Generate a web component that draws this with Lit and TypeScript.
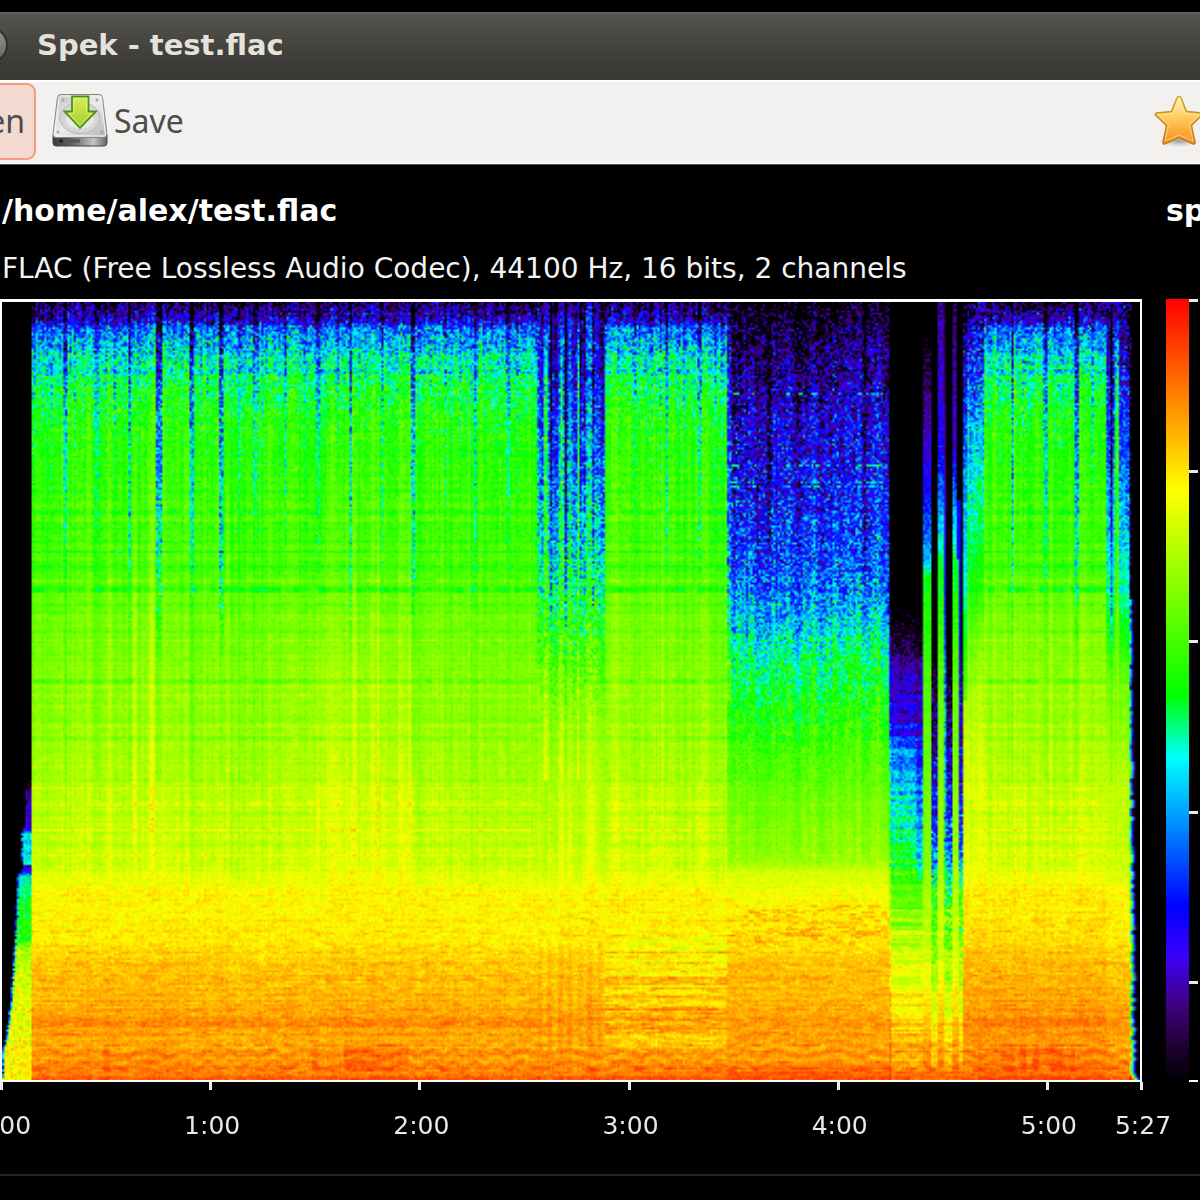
import { LitElement, html, css } from "lit";
import { customElement, query } from "lit/decorators.js";

type Stop = [number, number];

const PALETTE: [number, number, number, number][] = [
  [0, 0, 0, 0],
  [0.05, 34, 0, 56],
  [0.1, 66, 0, 130],
  [0.16, 58, 0, 250],
  [0.224, 0, 0, 255],
  [0.414, 0, 255, 255],
  [0.494, 0, 255, 0],
  [0.756, 255, 255, 0],
  [1, 255, 0, 0],
];

/* Level curves: [vertical position, signal level]. */
const LOUD: Stop[] = [
  [302, 0.06], [312, 0.11], [322, 0.18], [327, 0.29], [342, 0.37], [360, 0.43], [378, 0.48], [400, 0.515],
  [440, 0.54], [520, 0.565], [580, 0.58], [602, 0.61], [640, 0.625], [700, 0.645], [780, 0.68], [840, 0.7],
  [876, 0.72], [888, 0.75], [905, 0.76], [940, 0.77], [952, 0.795], [1000, 0.825], [1022, 0.85], [1040, 0.84],
  [1060, 0.86], [1074, 0.87], [1080, 0.93],
];
const BREAKDOWN: Stop[] = [
  [302, 0.05], [330, 0.16], [400, 0.23], [480, 0.33], [560, 0.43], [620, 0.52], [700, 0.63], [780, 0.69],
];
const QUIET: Stop[] = [
  [302, -0.02], [330, 0.06], [370, 0.12], [430, 0.18], [480, 0.21], [560, 0.28], [620, 0.38], [655, 0.47],
  [700, 0.52], [760, 0.58], [860, 0.65], [872, 0.71], [905, 0.76], [945, 0.78], [960, 0.81], [1000, 0.82],
  [1020, 0.845], [1060, 0.85], [1080, 0.93],
];
const PAUSE: Stop[] = [
  [302, -0.2], [600, -0.08], [640, 0.03], [690, 0.16], [732, 0.18], [742, 0.3], [780, 0.34], [815, 0.41],
  [850, 0.48], [880, 0.54], [900, 0.61], [940, 0.68], [1000, 0.76], [1060, 0.83], [1080, 0.92],
];
const GAPS: Stop[] = [
  [302, -0.2], [640, -0.03], [700, 0.05], [760, 0.15], [800, 0.2], [840, 0.28], [870, 0.4], [890, 0.52],
  [940, 0.61], [1000, 0.71], [1040, 0.77], [1060, 0.82], [1080, 0.92],
];
const RISE: Stop[] = [
  [302, 0.03], [330, 0.15], [380, 0.27], [430, 0.36], [500, 0.43], [580, 0.51], [640, 0.6], [700, 0.67], [800, 0.72],
];
const TAIL: Stop[] = [
  [302, 0.06], [340, 0.15], [430, 0.27], [500, 0.35], [560, 0.41], [620, 0.49], [680, 0.61], [800, 0.7],
];
const PEAK_A: Stop[] = [
  [302, -0.1], [350, 0.02], [420, 0.12], [500, 0.22], [560, 0.36], [578, 0.5], [700, 0.58], [860, 0.63], [960, 0.71], [1080, 0.9],
];
const PEAK_B: Stop[] = [
  [302, 0.1], [450, 0.2], [490, 0.3], [570, 0.5], [700, 0.6], [860, 0.66], [960, 0.72], [1080, 0.9],
];
const INTRO: Stop[] = [
  [780, 0.02], [796, 0.12], [828, 0.14], [834, 0.38], [864, 0.4], [866, 0.12], [871, 0.16], [876, 0.42],
  [900, 0.5], [940, 0.54], [952, 0.68], [1000, 0.73], [1080, 0.76],
];
const INTRO_EDGE: Stop[] = [
  [780, 27], [830, 24], [834, 21], [868, 22], [874, 18], [920, 16], [980, 12], [1020, 8], [1056, 2],
];

/* Dips: [horizontal position, width, depth]. */
const DIPS: [number, number, number][] = [
  [34, 4, 0.35], [51, 2, 0.5], [65, 3, 0.7], [74, 2, 0.4], [83, 2, 0.4], [96, 4, 0.6], [106, 2, 0.4], [115, 2, 0.5],
  [129, 2, 0.9], [138, 2, 0.35], [159, 4, 1], [170, 2, 0.3], [192, 3, 0.8], [201, 2, 0.3], [208, 2, 0.35],
  [222, 4, 1], [240, 2, 0.45], [256, 4, 0.6], [263, 2, 0.3], [286, 2, 0.7], [304, 2, 0.3], [318, 2, 0.7],
  [337, 2, 0.3], [350, 2, 1], [382, 2, 0.8], [398, 2, 0.3], [413, 3, 0.9], [430, 2, 0.3], [446, 2, 0.5],
  [460, 2, 0.4], [475, 3, 0.8], [492, 2, 0.4], [508, 3, 0.6], [517, 2, 0.4], [619, 2, 0.5], [634, 3, 0.55],
  [651, 2, 0.45], [660, 2, 0.5], [667, 2, 0.8], [684, 2, 0.4], [699, 3, 0.75], [715, 2, 0.5], [722, 2, 0.5],
  [1000, 2, 0.5], [1013, 2, 0.9], [1024, 2, 0.4], [1045, 3, 0.8], [1060, 2, 0.4], [1077, 3, 1], [1093, 2, 0.5],
  [551, 2, 0.9], [566, 2, 1], [594, 2, 1], [585, 2, 0.4], [738, 8, 0.5], [769, 4, 0.7], [802, 11, 0.45],
  [834, 8, 0.4], [865, 3, 0.9], [1112, 2, 1],
];
const RIDGES: [number, number, number][] = [
  [134, 4, 0.06], [152, 3, 0.06], [339, 2, 0.04], [355, 3, 0.06], [372, 3, 0.03], [378, 3, 0.06], [110, 2, 0.03],
  [324, 12, 0.02], [410, 2, 0.05], [400, 2, 0.03], [318, 2, 0.04], [236, 2, 0.03], [228, 2, 0.03], [283, 2, 0.03],
  [662, 2, 0.03], [1004, 3, 0.03], [1032, 3, 0.02], [1050, 2, 0.03], [1072, 3, 0.03],
];
/* Horizontal bands: [vertical position, height, change]. */
const BANDS: [number, number, number][] = [
  [372, 4, -0.05], [431, 2, -0.03], [457, 3, -0.03], [490, 2, -0.03], [512, 4, -0.035], [520, 3, 0.03],
  [528, 2, -0.03], [537, 2, -0.03], [542, 2, -0.03], [548, 3, 0.03], [552, 3, -0.045], [558, 3, 0.03],
  [567, 3, -0.04], [580, 3, 0.02], [589, 6, -0.07], [605, 2, -0.03], [613, 2, -0.03], [632, 3, -0.05],
  [641, 2, 0.03], [660, 2, -0.03], [682, 4, -0.045], [695, 2, 0.03], [704, 3, -0.03], [720, 2, -0.02],
  [739, 4, -0.02], [758, 5, -0.02], [780, 4, -0.02], [788, 2, 0.03], [804, 3, 0.035], [812, 5, -0.015],
  [830, 3, 0.04], [846, 5, -0.02], [856, 3, 0.03], [864, 5, -0.02], [873, 2, 0.02],
  [1024, 5, 0.02], [1050, 2, 0.02], [1056, 2, 0.02], [1069, 2, 0.02],
];

function curve(stops: Stop[], at: number): number {
  if (at <= stops[0][0]) return stops[0][1];
  for (let i = 1; i < stops.length; i++) {
    if (at <= stops[i][0]) {
      const [a, va] = stops[i - 1];
      const [b, vb] = stops[i];
      return va + ((vb - va) * (at - a)) / (b - a);
    }
  }
  return stops[stops.length - 1][1];
}

/* Repeatable noise in the range -1 to 1. */
function noise(a: number, b: number, seed: number): number {
  let h = Math.imul(a + 7919, 374761393) ^ Math.imul(b + 104729, 668265263) ^ Math.imul(seed + 1, 2246822519);
  h = Math.imul(h ^ (h >>> 13), 1274126177);
  h = Math.imul(h ^ (h >>> 16), 2246822519);
  return ((h ^ (h >>> 15)) >>> 0) / 2147483648 - 1;
}

const clamp = (v: number) => Math.max(0, Math.min(1, v));

function colour(level: number): [number, number, number] {
  const v = clamp(level);
  for (let i = 1; i < PALETTE.length; i++) {
    if (v <= PALETTE[i][0]) {
      const p = PALETTE[i - 1];
      const q = PALETTE[i];
      const t = (v - p[0]) / (q[0] - p[0]);
      return [p[1] + (q[1] - p[1]) * t, p[2] + (q[2] - p[2]) * t, p[3] + (q[3] - p[3]) * t];
    }
  }
  return [255, 0, 0];
}

function level(x: number, y: number, i: number, j: number): number {
  const n = (noise(i, j, 1) + noise(i, j, 2)) / 2;
  if (x < 32) {
    const edge = curve(INTRO_EDGE, y) + noise(0, j, 3) * 1.2;
    if (y < 780 || x < edge) return 0;
    const inside = curve(INTRO, y) + n * 0.1;
    return x < edge + 2 ? Math.min(inside, 0.2 + (x - edge) * 0.12) : inside;
  }
  const loud = curve(LOUD, y);
  const top = clamp((620 - y) / 320);
  const low = clamp((y - 870) / 30);
  let v = loud;
  let grain = 0.035 + 0.13 * clamp((450 - y) / 120) + 0.03 * clamp((600 - y) / 200);
  let bands = 1;
  let column = noise(i, 0, 4) * (0.022 + 0.03 * top) + noise(Math.floor(i / 6), 0, 13) * 0.014;
  let dipScale = 1;

  if (x < 537) {
    if (x > 300 && x < 415) v += 0.015 * clamp((y - 600) / 60) * (1 - low);
  } else if (x < 604) {
    v = y < 780 ? curve(BREAKDOWN, y) : loud;
    grain = 0.035 + 0.15 * clamp((740 - y) / 160);
    column *= 1 + 1.6 * clamp((760 - y) / 300);
    if (y < 780 && (Math.abs(x - 546) < 1.6 || Math.abs(x - 562) < 1.6 || Math.abs(x - 578) < 1.6)) {
      v = Math.max(v + 0.05, loud * 0.92);
      column = 0;
    }
    if (y > 940 && y < 1050) v += Math.cos((x / 5) * Math.PI) * 0.012;
    dipScale = 1.1;
    bands = 0.4;
  } else if (x < 728) {
    if (y > 925) {
      const stripe = clamp((y - 925) / 20) * clamp((1062 - y) / 30);
      v += stripe * (noise(0, j, 5) * 0.04 - 0.025);
      v += stripe * noise(Math.floor((i + j * 4) / 6), j, 6) * 0.035;
    }
  } else if (x < 890) {
    v = curve(QUIET, y);
    const body = clamp((870 - y) / 20);
    const reach = 0.45 + 0.55 * clamp((760 - y) / 100);
    grain = 0.035 + 0.17 * clamp((800 - y) / 240);
    column = (noise(i, 0, 4) * 0.05 + noise(Math.floor(i / 4), 0, 7) * 0.045) * body * reach;
    bands = 0.4;
    if (x < 732 && y < 700) v += 0.06;
    const dotted = [394, 466, 483, 487].some((r) => Math.abs(y - r) < 1);
    if (dotted && noise(Math.floor(i / 2), 0, 8) > 0.1 && noise(i, j, 14) > -0.5) return 0.42 + n * 0.14;
    if (y > 905 && y < 945 && noise(Math.floor(i / 3), j, 15) > 0.4) v += 0.05;
  } else if (x < 922) {
    v = curve(PAUSE, y);
    grain = y > 880 ? 0.04 : 0.1;
    bands = 0.3;
    if (y > 680) v += noise(0, Math.floor(j / 2), 9) * 0.06 * clamp((1040 - y) / 150);
    if (x < 892) v += 0.05;
    if (x > 917 && y > 740 && y < 880) v -= 0.08;
    if (y > 880) v += noise(0, j, 16) * 0.035;
  } else if (x < 964) {
    v = curve(GAPS, y);
    grain = 0.16 * clamp((1000 - y) / 100) * clamp((y - 640) / 60) + 0.04;
    bands = 0.3;
    column *= 0.5;
    if (y > 880) v += noise(0, j, 16) * 0.04;
    const first = x > 923 && x < 931;
    const second = x > 937 && x < 943;
    const third = x > 953 && x < 958 - (y < 560 ? 2 : 0);
    if (first) v = curve(PEAK_A, y);
    if (second || third) v = curve(PEAK_B, y) - (third && y < 470 ? 0.04 : 0);
    if (first || second || third) {
      grain = 0.06 * clamp((700 - y) / 200) + 0.03;
      column = 0;
    } else if (Math.abs(x - 944) < 1.1) {
      v = Math.max(v, curve([[302, 0], [440, 0.08], [560, 0.18], [700, 0.34], [860, 0.42]], y));
    } else if (x > 957 && x < 960 && y > 500) {
      v = Math.max(v, 0.2);
    }
    if (x > 962) v = Math.max(v, loud - 0.22);
  } else if (x < 984) {
    v = y < 800 ? curve(RISE, y) : loud + 0.01;
    grain += 0.07 * clamp((560 - y) / 100);
    if (x < 967 && y < 700) v -= 0.1;
    bands = 0.5;
  } else if (x < 1107) {
    v = loud + 0.015 * clamp((y - 560) / 80);
  } else if (x < 1129.5) {
    v = y < 800 ? curve(TAIL, y) : loud;
    grain += 0.07 * clamp((640 - y) / 100);
    if (x > 1114 && x < 1118 && y < 800) v = Math.max(v, loud - 0.01);
    bands = 0.5;
  } else {
    if (y < 600) return x < 1131 && n > 0.2 ? 0.1 : 0;
    const flare = y > 1072 ? (y - 1072) * 0.6 : 0;
    const edge = 1132 + clamp((y - 700) / 300) * 2.5 + noise(1, Math.floor(j / 2), 3) * 1.6 + flare;
    return clamp(0.2 + (edge - x) * 0.12) * (x < edge + 1.5 ? 1 : 0);
  }

  for (const [at, size, amount] of BANDS) {
    if (Math.abs(y - at) <= size / 2) v += amount * bands * (0.9 + 0.6 * noise(Math.floor(i / 3), at, 17));
  }
  for (const [at, size, depth] of DIPS) {
    if (Math.abs(x - at) <= size / 2 + 0.2) {
      const reach = 420 + depth * 250;
      const strength = clamp((reach - y) / 280);
      v -= depth * 0.25 * strength * dipScale;
      grain += depth * 0.12 * clamp(strength * 4);
      if (y > 460 && y < 780) v -= depth * 0.03;
    }
  }
  for (const [at, size, amount] of RIDGES) {
    if (Math.abs(x - at) <= size / 2) v += amount * clamp((y - 380) / 200) * clamp((880 - y) / 60);
  }
  v += noise(0, j, 10) * 0.018 * bands * (1 - 0.5 * low);
  v += noise(Math.floor((i + j * 3) / 5), j, 11) * (0.006 + 0.012 * low);
  if (low > 0 && noise(0, j, 18) > 0.1 && noise(Math.floor((i + j * 7) / 4), j, 19) > 0) v += 0.022 * low;
  if (y > 1044 && y < 1072) {
    const wave = Math.sin(x / 5 + Math.sin(x / 37) * 4) * 3;
    const ripple = Math.sin((y + wave) / 1.9);
    v += ripple * 0.022;
    if (((x > 288 && x < 408) || (x > 978 && x < 1075)) && noise(Math.floor(i / 3), 0, 12) > 0) v += 0.03;
    if (Math.abs(x - 107) < 3) v += 0.03;
  }
  return Math.min(v + column * (1 - 0.75 * low) + n * grain, 0.95);
}

@customElement("spectrogram-plot")
class SpectrogramPlot extends LitElement {
  static styles = css`
    :host {
      display: block;
      min-width: 0;
      min-height: 0;
      border: 2px solid #fff;
      border-top-width: 3px;
      overflow: hidden;
    }
    .plot {
      display: block;
      width: 100%;
      height: 100%;
    }
  `;

  @query("canvas") private canvas!: HTMLCanvasElement;

  firstUpdated() {
    const { width, height } = this.canvas;
    const context = this.canvas.getContext("2d")!;
    const image = context.createImageData(width, height);
    for (let j = 0; j < height; j++) {
      const y = 302 + ((j + 0.5) * 778) / height;
      for (let i = 0; i < width; i++) {
        const x = 2 + ((i + 0.5) * 1138) / width;
        const [r, g, b] = colour(level(x, y, i, j));
        image.data.set([r, g, b, 255], (j * width + i) * 4);
      }
    }
    context.putImageData(image, 0, 0);
  }

  render() {
    return html`<canvas class="plot" width="540" height="369" role="img" aria-label="Spectrogram"></canvas>`;
  }
}

@customElement("app-root")
class AppRoot extends LitElement {
  static styles = css`
    :host {
      display: flex;
      flex-direction: column;
      min-height: 100vh;
      box-sizing: border-box;
      padding-top: 12px;
      overflow: hidden;
      background: #000;
      color: #fff;
      font-family: "DejaVu Sans", sans-serif;
    }
    button {
      font: inherit;
      color: inherit;
      background: none;
      border: 0;
      padding: 0;
      margin: 0;
    }
    .titlebar {
      display: flex;
      align-items: center;
      gap: 29px;
      height: 68px;
      box-sizing: border-box;
      padding-bottom: 4px;
      border-top: 2px solid #5f5e57;
      background: linear-gradient(#55544d, #45443f 45%, #3c3b37 75%, #3a3935);
    }
    .control {
      flex: none;
      width: 36px;
      height: 36px;
      margin-left: -28px;
      border-radius: 50%;
      border: 2px solid #32312d;
      background: linear-gradient(#92918a, #67665f);
    }
    .caption {
      margin: 0;
      font-size: 29px;
      line-height: 40px;
      font-weight: 700;
      color: #e4e2db;
      white-space: nowrap;
    }
    .toolbar {
      display: flex;
      align-items: center;
      gap: 16px;
      height: 84px;
      box-sizing: border-box;
      padding-bottom: 2px;
      border-top: 2px solid #fff;
      border-bottom: 2px solid #fbfbfa;
      box-shadow: 0 1px 0 #55534f;
      background: #f2f1ef;
      color: #4c4c4c;
      font-family: "Noto Sans", sans-serif;
      font-size: 32px;
      line-height: 40px;
      overflow: hidden;
    }
    .open {
      flex: none;
      display: flex;
      align-items: center;
      justify-content: flex-end;
      width: 36px;
      height: 77px;
      box-sizing: border-box;
      padding-right: 9px;
      overflow: hidden;
      border: 2px solid #f59a7a;
      border-left: 0;
      border-radius: 0 9px 9px 0;
      background: #f2dad1;
    }
    .save {
      display: flex;
      align-items: center;
      gap: 6px;
    }
    .drive {
      display: block;
      width: 56px;
      height: 56px;
    }
    .donate {
      flex: none;
      width: 46px;
      margin-left: auto;
      overflow: hidden;
    }
    .star {
      display: block;
      width: 50px;
      height: 54px;
    }
    .view {
      flex: 1;
      display: grid;
      grid-template-columns: minmax(0, 1fr) 34px;
      grid-template-rows: 56px 60px minmax(500px, 1fr) auto;
      column-gap: 24px;
      padding: 19px 0 12px;
      border-bottom: 2px solid #262626;
      margin-bottom: 25px;
    }
    .path,
    .brand {
      margin: 0;
      font-size: 30px;
      line-height: 56px;
      font-weight: 700;
      white-space: nowrap;
      overflow: hidden;
    }
    .path {
      padding-left: 2px;
    }
    .codec {
      grid-column: 1 / -1;
      margin: 0;
      padding-left: 2px;
      font-size: 28px;
      line-height: 60px;
      color: #f4f4f4;
      white-space: nowrap;
    }
    .scale {
      display: grid;
      grid-template-columns: 23px 9px;
    }
    .ramp {
      background: linear-gradient(
        #f00,
        #ff0 24.4%,
        #0f0 50.6%,
        #0ff 58.6%,
        #00f 77.6%,
        #3a00fa 84%,
        #420082 90%,
        #220038 95%,
        #000
      );
    }
    .levels {
      display: grid;
      grid-template-rows: repeat(4, 17fr) 10fr;
    }
    .step {
      border-top: 3px solid #e8e8e8;
    }
    .step:last-child {
      border-bottom: 2px solid #fff;
    }
    .times {
      display: grid;
      grid-template-columns: repeat(5, 60fr) 27fr 2px;
      font-size: 25px;
      line-height: 72px;
      color: #e8e8e8;
    }
    .time::before {
      content: "";
      display: block;
      width: 3px;
      height: 8px;
      background: #eee;
    }
    .stamp {
      display: flex;
      justify-content: center;
      width: 6px;
    }
  `;

  private times = ["0:00", "1:00", "2:00", "3:00", "4:00", "5:00", "5:27"];

  render() {
    return html`
      <header class="titlebar">
        <button class="control" aria-label="Maximize"></button>
        <h1 class="caption">Spek - test.flac</h1>
      </header>
      <nav class="toolbar">
        <button class="open">Open</button>
        <button class="save">
          <svg class="drive" viewBox="0 0 56 56" aria-hidden="true">
            <defs>
              <linearGradient id="lid" x1="0" y1="0" x2="1" y2="1">
                <stop offset="0" stop-color="#c4c4c4" />
                <stop offset=".5" stop-color="#ececec" />
                <stop offset="1" stop-color="#b4b4b4" />
              </linearGradient>
              <linearGradient id="front" x1="0" y1="0" x2="1" y2="0">
                <stop offset="0" stop-color="#3c3c3c" />
                <stop offset=".35" stop-color="#606060" />
                <stop offset=".75" stop-color="#c4c4c4" />
                <stop offset="1" stop-color="#666" />
              </linearGradient>
              <linearGradient id="arrow" x1="0" y1="0" x2="0" y2="1">
                <stop offset="0" stop-color="#d8ee5c" />
                <stop offset="1" stop-color="#a1cb2c" />
              </linearGradient>
            </defs>
            <path d="M1 42h54v8q0 3-3 3H4q-3 0-3-3z" fill="url(#front)" stroke="#444" />
            <path d="M9 1.500h38q3 0 3.500 3l4.500 37q0 3-3 3H4q-3 0-3-3L5.500 4.500q.5-3 3.500-3z" fill="url(#lid)" stroke="#858585" />
            <path d="M9.500 3h37q2 0 2.500 2l4.500 36.500q0 1.500-2 1.500h-47q-2 0-2-1.500L7 5q.5-2 2.500-2z" fill="none" stroke="#f7f7f7" />
            <ellipse cx="28" cy="25" rx="20" ry="15.500" fill="#d6d6d6" stroke="#b5b5b5" />
            <ellipse cx="28" cy="27" rx="14" ry="9" fill="#e8e8e8" />
            <g fill="#a5a5a5">
              <circle cx="11" cy="7" r="1.500" />
              <circle cx="45" cy="7" r="1.500" />
              <circle cx="6" cy="39" r="1.500" />
              <circle cx="50" cy="39" r="1.500" />
            </g>
            <path d="M7 46.500h4v3H7z" fill="#222" />
            <path d="M12 46.500h16v3H12z" fill="#555" />
            <path d="M20 3.500h16.500v15h7.500L28 35 12.500 18.500H20z" fill="url(#arrow)" stroke="#4d9310" stroke-width="1.800" />
            <path d="M21.800 5.300h12.900v15h5L28 32.500 16.700 20.300h5.100z" fill="none" stroke="#e8f59a" stroke-opacity=".7" />
          </svg>
          <span>Save</span>
        </button>
        <button class="donate" aria-label="Donate">
          <svg class="star" viewBox="0 0 50 54" aria-hidden="true">
            <defs>
              <linearGradient id="gold" x1="0" y1="0" x2="0" y2="1">
                <stop offset="0" stop-color="#fff3bd" />
                <stop offset=".45" stop-color="#fdcb5c" />
                <stop offset="1" stop-color="#f68f1d" />
              </linearGradient>
              <linearGradient id="rim" x1="0" y1="0" x2="0" y2="1">
                <stop offset="0" stop-color="#cba31c" />
                <stop offset="1" stop-color="#c7771b" />
              </linearGradient>
              <radialGradient id="shade">
                <stop offset="0" stop-color="#777" stop-opacity=".7" />
                <stop offset="1" stop-color="#999" stop-opacity="0" />
              </radialGradient>
            </defs>
            <ellipse cx="25" cy="47" rx="20" ry="6" fill="url(#shade)" />
            <path
              d="M25 2.500q1.500 0 2 1.500L32.500 17.500l15 1.500q2 .5.500 2L37.500 31.500l3.500 17q0 2-2 1.200L25 43.500l-14 6.200q-2 .8-2-1.200l3.500-17L1.500 21q-1-1.500 1-2L17.500 17.500 23 4Q23.500 2.500 25 2.500z"
              fill="url(#gold)"
              stroke="url(#rim)"
              stroke-width="1.500"
            />
            <path
              d="M25 6.500L31 19.500l14 1.500-9.500 9.500 3.500 16.500-14-6-14 6 3.500-16.500L5 21l14-1.500z"
              fill="none"
              stroke="#fff0b8"
              stroke-opacity=".5"
            />
          </svg>
        </button>
      </nav>
      <main class="view">
        <h2 class="path">/home/alex/test.flac</h2>
        <p class="brand">spek</p>
        <p class="codec">FLAC (Free Lossless Audio Codec), 44100 Hz, 16 bits, 2 channels</p>
        <spectrogram-plot></spectrogram-plot>
        <div class="scale">
          <div class="ramp"></div>
          <div class="levels">${[0, 1, 2, 3, 4].map(() => html`<div class="step"></div>`)}</div>
        </div>
        <div class="times">
          ${this.times.map((t) => html`<div class="time"><span class="stamp">${t}</span></div>`)}
        </div>
      </main>
    `;
  }
}
